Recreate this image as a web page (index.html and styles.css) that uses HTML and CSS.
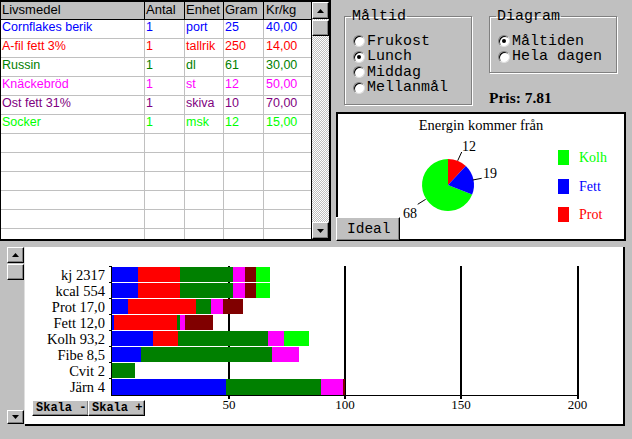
FILE: index.html
```html
<!DOCTYPE html>
<html lang="sv">
<head>
<meta charset="utf-8">
<title>Måltid</title>
<link rel="stylesheet" href="styles.css">
</head>
<body>
<div class="top">
  <div class="table-wrap">
    <div class="grid">
      <div class="row head"><div class="c c1">Livsmedel</div><div class="c c2">Antal</div><div class="c c3">Enhet</div><div class="c c4">Gram</div><div class="c c5">Kr/kg</div></div>
      <div class="row t-blue"><div class="c c1">Cornflakes berik</div><div class="c c2">1</div><div class="c c3">port</div><div class="c c4">25</div><div class="c c5">40,00</div></div>
      <div class="row t-red"><div class="c c1">A-fil fett 3%</div><div class="c c2">1</div><div class="c c3">tallrik</div><div class="c c4">250</div><div class="c c5">14,00</div></div>
      <div class="row t-green"><div class="c c1">Russin</div><div class="c c2">1</div><div class="c c3">dl</div><div class="c c4">61</div><div class="c c5">30,00</div></div>
      <div class="row t-magenta"><div class="c c1">Knäckebröd</div><div class="c c2">1</div><div class="c c3">st</div><div class="c c4">12</div><div class="c c5">50,00</div></div>
      <div class="row t-purple"><div class="c c1">Ost fett 31%</div><div class="c c2">1</div><div class="c c3">skiva</div><div class="c c4">10</div><div class="c c5">70,00</div></div>
      <div class="row t-lime"><div class="c c1">Socker</div><div class="c c2">1</div><div class="c c3">msk</div><div class="c c4">12</div><div class="c c5">15,00</div></div>
      <div class="row"><div class="c c1"></div><div class="c c2"></div><div class="c c3"></div><div class="c c4"></div><div class="c c5"></div></div>
      <div class="row"><div class="c c1"></div><div class="c c2"></div><div class="c c3"></div><div class="c c4"></div><div class="c c5"></div></div>
      <div class="row"><div class="c c1"></div><div class="c c2"></div><div class="c c3"></div><div class="c c4"></div><div class="c c5"></div></div>
      <div class="row"><div class="c c1"></div><div class="c c2"></div><div class="c c3"></div><div class="c c4"></div><div class="c c5"></div></div>
      <div class="row"><div class="c c1"></div><div class="c c2"></div><div class="c c3"></div><div class="c c4"></div><div class="c c5"></div></div>
      <div class="row"><div class="c c1"></div><div class="c c2"></div><div class="c c3"></div><div class="c c4"></div><div class="c c5"></div></div>
    </div>
    <div class="vscroll">
      <div class="sbtn"><svg width="7" height="4" viewBox="0 0 7 4"><polygon points="3.5,0 7,4 0,4" fill="#000"/></svg></div>
      <div class="thumb"></div>
      <div class="track"></div>
      <div class="sbtn"><svg width="7" height="4" viewBox="0 0 7 4"><polygon points="0,0 7,0 3.5,4" fill="#000"/></svg></div>
    </div>
  </div>

  <div class="right">
    <div class="groups">
      <fieldset class="group maltid">
        <legend>Måltid</legend>
        <div class="radios">
          <div class="radio"><span class="dot"></span>Frukost</div>
          <div class="radio"><span class="dot on"></span>Lunch</div>
          <div class="radio"><span class="dot"></span>Middag</div>
          <div class="radio"><span class="dot"></span>Mellanmål</div>
        </div>
      </fieldset>
      <div class="diag-col">
        <fieldset class="group diagram">
          <legend>Diagram</legend>
          <div class="radios">
            <div class="radio"><span class="dot on"></span>Måltiden</div>
            <div class="radio"><span class="dot"></span>Hela dagen</div>
          </div>
        </fieldset>
        <div class="pris">Pris: 7.81</div>
      </div>
    </div>

    <div class="piebox">
      <div class="pie-title">Energin kommer från</div>
      <div class="pie-body">
        <svg class="pie" width="220" height="103" viewBox="0 0 220 103">
          <path d="M110,50 L134.17,59.57 A26,26 0 1 1 110,24 Z" fill="#00ff00"/>
          <path d="M110,50 L110,24 A26,26 0 0 1 127.8,31.05 Z" fill="#ff0000"/>
          <path d="M110,50 L127.8,31.05 A26,26 0 0 1 134.17,59.57 Z" fill="#0000ff"/>
          <g stroke="#000" stroke-width="1">
            <line x1="119.7" y1="25.7" x2="123.7" y2="17"/>
            <line x1="134.7" y1="45" x2="143.7" y2="43.3"/>
            <line x1="79.7" y1="69.3" x2="87.7" y2="64.3"/>
          </g>
          <g class="pie-num">
            <text x="124" y="16">12</text>
            <text x="145" y="43">19</text>
            <text x="65" y="83">68</text>
          </g>
        </svg>
        <div class="legend">
          <div class="leg c-lime"><span class="sw"></span>Kolh</div>
          <div class="leg c-blue"><span class="sw"></span>Fett</div>
          <div class="leg c-red"><span class="sw"></span>Prot</div>
        </div>
      </div>
      <button class="btn ideal">Ideal</button>
    </div>
  </div>
</div>

<div class="bottom">
  <div class="vscroll2">
    <div class="sbtn"><svg width="7" height="4" viewBox="0 0 7 4"><polygon points="3.5,0 7,4 0,4" fill="#000"/></svg></div>
    <div class="thumb2"></div>
    <div class="track2"></div>
    <div class="sbtn sdown"><svg width="7" height="4" viewBox="0 0 7 4"><polygon points="0,0 7,0 3.5,4" fill="#000"/></svg></div>
  </div>
  <div class="canvas">
    <div class="labels">
      <div>kj 2317</div>
      <div>kcal 554</div>
      <div>Prot 17,0</div>
      <div>Fett 12,0</div>
      <div>Kolh 93,2</div>
      <div>Fibe 8,5</div>
      <div>Cvit 2</div>
      <div>Järn 4</div>
    </div>
    <svg class="plot" width="490" height="150" viewBox="0 0 490 150" shape-rendering="crispEdges">
      <g fill="#000">
        <rect x="120" y="0" width="2" height="133"/>
        <rect x="236" y="0" width="2" height="133"/>
        <rect x="352" y="0" width="2" height="133"/>
        <rect x="469" y="0" width="2" height="133"/>
        <rect x="3" y="0" width="1" height="130"/>
        <rect x="3" y="129" width="468" height="1"/>
        <rect x="1" y="0" width="2" height="1"/>
        <rect x="1" y="16" width="2" height="1"/>
        <rect x="1" y="32" width="2" height="1"/>
        <rect x="1" y="48" width="2" height="1"/>
        <rect x="1" y="64" width="2" height="1"/>
        <rect x="1" y="80" width="2" height="1"/>
        <rect x="1" y="96" width="2" height="1"/>
        <rect x="1" y="112" width="2" height="1"/>
      </g>
      <!-- kj -->
      <g transform="translate(0,1)">
        <rect x="4" width="26" height="15" fill="#0000ff"/>
        <rect x="30" width="42" height="15" fill="#ff0000"/>
        <rect x="72" width="53" height="15" fill="#008000"/>
        <rect x="125" width="12" height="15" fill="#ff00ff"/>
        <rect x="137" width="11" height="15" fill="#800000"/>
        <rect x="148" width="14" height="15" fill="#00ff00"/>
      </g>
      <!-- kcal -->
      <g transform="translate(0,17)">
        <rect x="4" width="26" height="15" fill="#0000ff"/>
        <rect x="30" width="42" height="15" fill="#ff0000"/>
        <rect x="72" width="53" height="15" fill="#008000"/>
        <rect x="125" width="12" height="15" fill="#ff00ff"/>
        <rect x="137" width="11" height="15" fill="#800000"/>
        <rect x="148" width="14" height="15" fill="#00ff00"/>
      </g>
      <!-- Prot -->
      <g transform="translate(0,33)">
        <rect x="4" width="16" height="15" fill="#0000ff"/>
        <rect x="20" width="68" height="15" fill="#ff0000"/>
        <rect x="88" width="15" height="15" fill="#008000"/>
        <rect x="103" width="12" height="15" fill="#ff00ff"/>
        <rect x="115" width="20" height="15" fill="#800000"/>
      </g>
      <!-- Fett -->
      <g transform="translate(0,49)">
        <rect x="4" width="2" height="15" fill="#0000ff"/>
        <rect x="6" width="63" height="15" fill="#ff0000"/>
        <rect x="69" width="3" height="15" fill="#008000"/>
        <rect x="72" width="5" height="15" fill="#ff00ff"/>
        <rect x="77" width="28" height="15" fill="#800000"/>
      </g>
      <!-- Kolh -->
      <g transform="translate(0,65)">
        <rect x="4" width="41" height="15" fill="#0000ff"/>
        <rect x="45" width="25" height="15" fill="#ff0000"/>
        <rect x="70" width="90" height="15" fill="#008000"/>
        <rect x="160" width="16" height="15" fill="#ff00ff"/>
        <rect x="176" width="25" height="15" fill="#00ff00"/>
      </g>
      <!-- Fibe -->
      <g transform="translate(0,81)">
        <rect x="4" width="29" height="15" fill="#0000ff"/>
        <rect x="33" width="131" height="15" fill="#008000"/>
        <rect x="164" width="27" height="15" fill="#ff00ff"/>
      </g>
      <!-- Cvit -->
      <g transform="translate(0,97)">
        <rect x="4" width="23" height="15" fill="#008000"/>
      </g>
      <!-- Järn -->
      <g transform="translate(0,113)">
        <rect x="4" width="114" height="16" fill="#0000ff"/>
        <rect x="118" width="95" height="16" fill="#008000"/>
        <rect x="213" width="22" height="16" fill="#ff00ff"/>
        <rect x="235" width="2" height="16" fill="#800000"/>
      </g>
      <g class="axis-num" shape-rendering="auto">
        <text x="121" y="143">50</text>
        <text x="237" y="143">100</text>
        <text x="353" y="143">150</text>
        <text x="469.5" y="143">200</text>
      </g>
    </svg>
    <div class="scale-btns">
      <button class="btn skala">Skala -</button>
      <button class="btn skala">Skala +</button>
    </div>
  </div>
</div>
</body>
</html>
```

FILE: styles.css
```css
* { box-sizing: border-box; }
html, body { margin: 0; padding: 0; }
body {
  width: 632px;
  height: 439px;
  overflow: hidden;
  background: #c0c0c0;
  font-family: "Liberation Sans", Arial, sans-serif;
  color: #000;
}

/* ---------- top section ---------- */
.top { display: flex; height: 241px; }

.table-wrap {
  width: 331px;
  height: 241px;
  border-style: solid;
  border-color: #000;
  border-width: 2px 2px 2px 1px;
  background: #fff;
  display: flex;
  overflow: hidden;
}
.grid {
  width: 310px;
  display: flex;
  flex-direction: column;
  overflow: hidden;
}
.row {
  display: flex;
  flex: none;
  height: 19px;
  border-bottom: 1px solid #c0c0c0;
}
.row.head {
  height: 18px;
  background: #c0c0c0;
  border-bottom-color: #000;
}
.c {
  flex: none;
  border-right: 1px solid #c0c0c0;
  padding-left: 1px;
  font-size: 12.5px;
  line-height: 15px;
  white-space: nowrap;
  overflow: hidden;
}
.head .c { border-right-color: #000; font-size: 13px; }
.c1 { width: 144px; }
.c2 { width: 40px; }
.c3 { width: 39px; }
.c4 { width: 40px; }
.c5 { width: 47px; border-right: 0; padding-left: 2px; }

.t-blue { color: #0000ff; }
.t-red { color: #ff0000; }
.t-green { color: #008000; }
.t-magenta { color: #ff00ff; }
.t-purple { color: #800080; }
.t-lime { color: #00ff00; }

.vscroll {
  width: 18px;
  border-left: 1px solid #000;
  display: flex;
  flex-direction: column;
  background-color: #fff;
  background-image: repeating-conic-gradient(#c0c0c0 0% 25%, #fff 0% 50%);
  background-size: 2px 2px;
}
.sbtn {
  flex: none;
  height: 17px;
  background: #c0c0c0;
  border: 1px solid;
  border-color: #fff #000 #000 #fff;
  box-shadow: inset -1px -1px 0 #808080;
  display: flex;
  align-items: center;
  justify-content: center;
}
.sbtn svg { display: block; }
.thumb {
  flex: none;
  height: 16px;
  margin-top: 1px;
  background: #c0c0c0;
  border: 1px solid;
  border-color: #fff #000 #000 #fff;
  box-shadow: inset -1px -1px 0 #808080;
}
.track { flex: 1; }

/* ---------- right panel ---------- */
.right {
  width: 301px;
  padding-left: 5px;
  display: flex;
  flex-direction: column;
}
.groups {
  height: 112px;
  padding: 8px 0 0 8px;
  display: flex;
  align-items: flex-start;
  gap: 17px;
}
.group {
  margin: 0;
  padding: 0;
  width: 128px;
  min-inline-size: 0;
  border: 1px solid #808080;
  box-shadow: 1px 1px 0 #fff, inset 1px 1px 0 #fff;
  font-family: "Liberation Mono", "Courier New", monospace;
  font-size: 15px;
}
.group legend {
  margin-left: 6px;
  padding: 0 1px;
  line-height: 17px;
  font-size: 15px;
}
.radios { padding: 8.5px 0 8px 8px; }
.diagram .radios { padding-bottom: 7px; }
.radio {
  display: flex;
  align-items: center;
  height: 15.5px;
  line-height: 15.5px;
  white-space: nowrap;
}
.dot {
  flex: none;
  width: 12px;
  height: 12px;
  margin-right: 2px;
  border-radius: 50%;
  background: #fff;
  border: 1px solid;
  border-color: #808080 #dfdfdf #dfdfdf #808080;
  box-shadow: inset 1px 1px 0 #000;
  display: flex;
  align-items: center;
  justify-content: center;
}
.dot.on::after {
  content: "";
  width: 4px;
  height: 4px;
  border-radius: 50%;
  background: #000;
}
.diag-col { display: flex; flex-direction: column; }
.pris {
  margin-top: 16px;
  font-family: "Liberation Serif", "Times New Roman", serif;
  font-weight: bold;
  font-size: 15.5px;
  line-height: 18px;
}

.piebox {
  position: relative;
  width: 290px;
  height: 129px;
  border: 2px solid #000;
  background: #fff;
  display: flex;
  flex-direction: column;
  font-family: "Liberation Serif", "Times New Roman", serif;
}
.pie-title {
  padding-top: 1px;
  line-height: 20px;
  font-size: 14.5px;
  text-align: center;
}
.pie-body { display: flex; }
.pie { display: block; flex: none; }
.pie-num { font-family: "Liberation Serif", "Times New Roman", serif; font-size: 14px; }
.legend {
  display: flex;
  flex-direction: column;
  gap: 13.5px;
  padding-top: 15px;
}
.leg {
  display: flex;
  align-items: flex-end;
  height: 15px;
  font-size: 14px;
  line-height: 15px;
}
.sw { width: 11px; height: 15px; margin-right: 10px; }
.c-lime { color: #00ff00; }
.c-lime .sw { background: #00ff00; }
.c-blue { color: #0000ff; }
.c-blue .sw { background: #0000ff; }
.c-red { color: #ff0000; }
.c-red .sw { background: #ff0000; }

.btn {
  margin: 0;
  background: #c0c0c0;
  border: 1px solid;
  border-color: #fff #000 #000 #fff;
  box-shadow: inset -1px -1px 0 #808080;
  color: #000;
  font-family: "Liberation Mono", "Courier New", monospace;
  text-align: left;
  cursor: default;
}
.ideal {
  position: absolute;
  left: -2px;
  bottom: -2px;
  width: 64px;
  height: 24px;
  padding: 0 0 0 10px;
  font-size: 14.5px;
  line-height: 20px;
}

/* ---------- bottom chart ---------- */
.bottom {
  display: flex;
  align-items: flex-start;
  margin: 6px 0 0 7px;
  height: 179px;
}
.vscroll2 {
  width: 18px;
  height: 177px;
  border-right: 1px solid #dfdfdf;
  display: flex;
  flex-direction: column;
  background: #c0c0c0;
}
.vscroll2 .sbtn { height: 16px; }
.vscroll2 .sdown { height: 14px; }
.thumb2 {
  flex: none;
  height: 16px;
  margin-top: 1px;
  background: #c0c0c0;
  border: 1px solid;
  border-color: #fff #000 #000 #fff;
  box-shadow: inset -1px -1px 0 #808080;
}
.track2 { flex: 1; }

.canvas {
  width: 600px;
  height: 179px;
  background: #fff;
  border-right: 2px solid #000;
  border-bottom: 2px solid #000;
  padding-top: 19px;
  display: grid;
  grid-template-columns: 83px 1fr;
  grid-template-rows: 129px auto;
  overflow: hidden;
}
.labels {
  grid-column: 1;
  grid-row: 1;
  padding: 1px 3px 0 0;
  text-align: right;
  font-family: "Liberation Serif", "Times New Roman", serif;
  font-size: 14.5px;
  line-height: 16px;
  white-space: nowrap;
}
.plot {
  grid-column: 2;
  grid-row: 1 / span 2;
  display: block;
}
.axis-num {
  font-family: "Liberation Serif", "Times New Roman", serif;
  font-size: 13px;
  text-anchor: middle;
}
.scale-btns {
  grid-column: 1 / span 2;
  grid-row: 2;
  z-index: 1;
  align-self: start;
  justify-self: start;
  margin: 5px 0 0 7px;
  display: flex;
}
.skala {
  height: 16px;
  padding: 0 0 0 3px;
  font-size: 12px;
  font-weight: bold;
  line-height: 14px;
}
.skala:first-child { width: 57px; }
.skala:last-child { width: 57px; margin-left: -1px; }
```
